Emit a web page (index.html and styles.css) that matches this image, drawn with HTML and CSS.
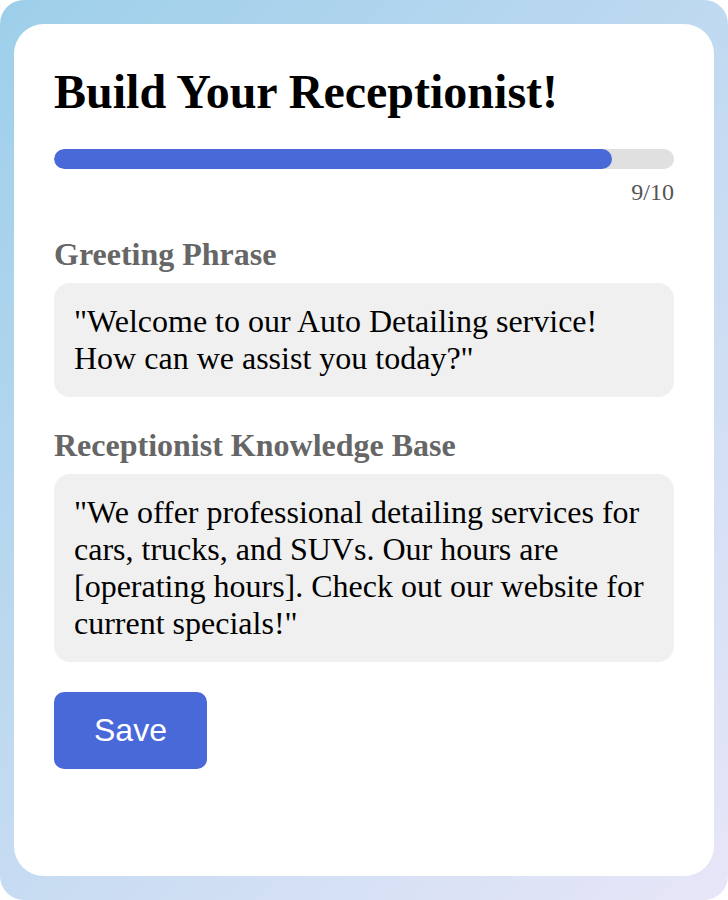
FILE: index.html
```html
<!DOCTYPE html>
<html lang="en">
<head>
<meta charset="UTF-8">
<meta name="viewport" content="width=device-width, initial-scale=1.0">
<title>Build Your Receptionist</title>
<link rel="stylesheet" href="styles.css">
</head>
<body>

<div class="page">
    <div class="card">
        <h1 class="title">Build Your Receptionist!</h1>

        <div class="progress">
            <div class="progress-fill" style="width: 90%;"></div>
        </div>
        <div class="step-count">9/10</div>

        <div class="field">
            <div class="field-label">Greeting Phrase</div>
            <div class="field-box">"Welcome to our Auto Detailing service! How can we assist you today?"</div>
        </div>

        <div class="field">
            <div class="field-label">Receptionist Knowledge Base</div>
            <div class="field-box">"We offer professional detailing services for cars, trucks, and SUVs. Our hours are [operating hours]. Check out our website for current specials!"</div>
        </div>

        <button type="button" class="save-btn">Save</button>
    </div>
</div>

</body>
</html>
```

FILE: styles.css
```css
body {
    margin: 0;
    font-family: "Liberation Serif", "Times New Roman", serif;
    background-color: #fff;
}
.page {
    height: 100vh;
    box-sizing: border-box;
    padding: 24px 14px;
    border-radius: 24px;
    background: linear-gradient(135deg, #9dcfea 0%, #e8e6f8 100%);
}
.card {
    height: 100%;
    box-sizing: border-box;
    padding: 40px;
    background-color: #fff;
    border-radius: 30px;
}
.title {
    margin: 0 0 30px;
    font-size: 48px;
    font-weight: bold;
    color: #000;
}
.progress {
    height: 20px;
    background-color: #e0e0e0;
    border-radius: 10px;
    overflow: hidden;
}
.progress-fill {
    height: 100%;
    background-color: #4a69d9;
    border-radius: 10px;
}
.step-count {
    margin-top: 10px;
    text-align: right;
    font-size: 24px;
    color: #555;
}
.field {
    margin-top: 30px;
}
.field-label {
    margin-bottom: 10px;
    font-size: 32px;
    font-weight: bold;
    color: #666;
}
.field-box {
    padding: 20px;
    font-size: 32px;
    color: #000;
    background-color: #f0f0f0;
    border-radius: 16px;
}
.save-btn {
    margin-top: 30px;
    padding: 20px 40px;
    font-family: "Liberation Sans", Arial, sans-serif;
    font-size: 32px;
    color: #fff;
    background-color: #4a69d9;
    border: none;
    border-radius: 10px;
    cursor: pointer;
}
```
